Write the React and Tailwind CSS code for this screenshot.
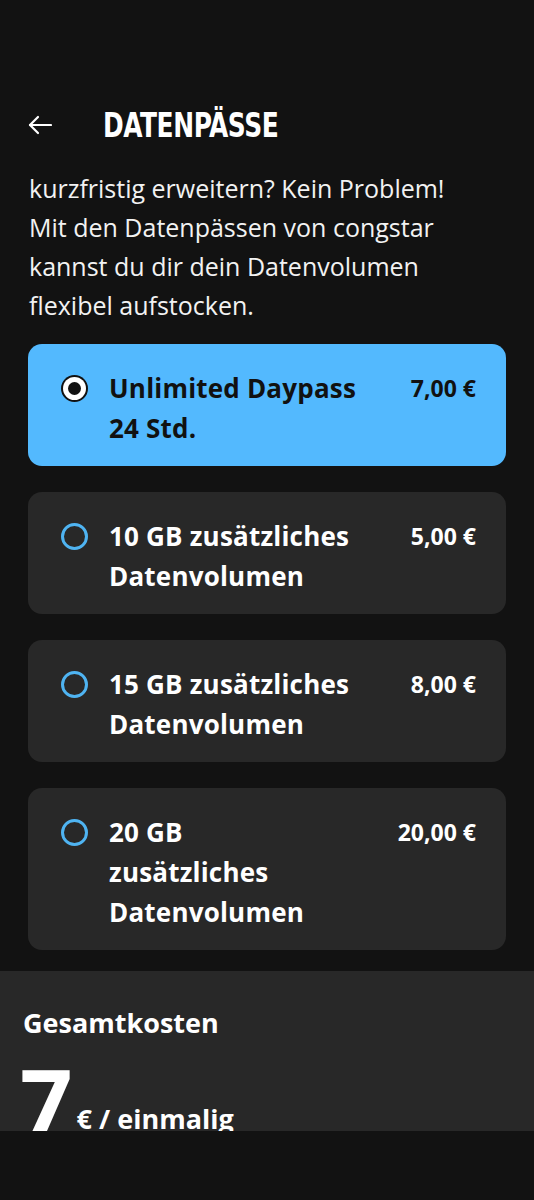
import React from 'react';

// Pass options shown in the list
const passes = [
  { id: 'day', lines: ['Unlimited Daypass', '24 Std.'], price: '7,00 €' },
  { id: '10gb', lines: ['10 GB zusätzliches', 'Datenvolumen'], price: '5,00 €' },
  { id: '15gb', lines: ['15 GB zusätzliches', 'Datenvolumen'], price: '8,00 €' },
  { id: '20gb', lines: ['20 GB', 'zusätzliches', 'Datenvolumen'], price: '20,00 €' },
];

const intro = [
  'kurzfristig erweitern? Kein Problem!',
  'Mit den Datenpässen von congstar',
  'kannst du dir dein Datenvolumen',
  'flexibel aufstocken.',
];

function Radio({ checked }) {
  if (checked) {
    return (
      <div className="w-[27px] h-[27px] rounded-full bg-[#111] flex items-center justify-center shrink-0">
        <div className="w-[23px] h-[23px] rounded-full bg-white flex items-center justify-center">
          <div className="w-[13px] h-[13px] rounded-full bg-[#111]"></div>
        </div>
      </div>
    );
  }
  return <div className="w-[27px] h-[27px] rounded-full border-[3px] border-[#4fb4f2] shrink-0"></div>;
}

function PassCard({ pass, selected }) {
  return (
    <div
      className={
        selected
          ? 'rounded-[14px] bg-[#53b9fe] text-[#111] pl-[33px] pr-[30px] pt-6 pb-[18px] flex items-start'
          : 'rounded-[14px] bg-[#282828] text-white pl-[33px] pr-[30px] pt-6 pb-[18px] flex items-start'
      }
    >
      <div className="h-10 flex items-center">
        <Radio checked={selected} />
      </div>
      <div className="flex-1 ml-[21px] text-[26px] leading-10 font-bold tracking-[0.2px]">
        {pass.lines.map((l) => (
          <div key={l}>{l}</div>
        ))}
      </div>
      <div className="text-[23px] leading-10 font-bold">{pass.price}</div>
    </div>
  );
}

export default function App() {
  const selectedId = 'day';

  return (
    <div className="w-[534px] h-[1200px] bg-[#121212] text-white flex flex-col overflow-hidden font-['Open_Sans','Noto_Sans',sans-serif]">
      {/* header */}
      <div className="pt-[106px] pl-[28px] flex items-center h-[144px]">
        <svg width="24" height="20" viewBox="0 0 24 20" fill="none" stroke="white" strokeWidth="2.2" strokeLinecap="round" strokeLinejoin="round">
          <path d="M23 10H2" />
          <path d="M10 2L2 10l8 8" />
        </svg>
        <h1 className="ml-[51px] text-[33px] leading-none font-bold tracking-[-0.5px] origin-left scale-x-[0.84] font-['DejaVu_Sans_Condensed',sans-serif]">
          DATENPÄSSE
        </h1>
      </div>

      <div className="px-[29px] pt-[25px] text-[25px] leading-[39px] text-[#f2f2f2]">
        {intro.map((l) => (
          <div key={l}>{l}</div>
        ))}
      </div>

      <div className="px-[28px] mt-[19px] flex flex-col gap-[26px]">
        {passes.map((p) => (
          <PassCard key={p.id} pass={p} selected={p.id === selectedId} />
        ))}
      </div>

      {/* total, cut off by the bottom bar */}
      <div className="mt-[21px] bg-[#282828] h-[160px] px-[23px] pt-[36px] overflow-hidden shrink-0">
        <div className="text-[27px] font-bold leading-8">Gesamtkosten</div>
        <div className="flex items-start mt-[16px]">
          <span className="text-[92px] font-bold leading-[92px] -ml-[3px]">7</span>
          <span className="ml-[4px] mt-[44px] text-[27px] font-bold">€ / einmalig</span>
        </div>
      </div>
      <div className="flex-1 bg-[#121212]"></div>
    </div>
  );
}
